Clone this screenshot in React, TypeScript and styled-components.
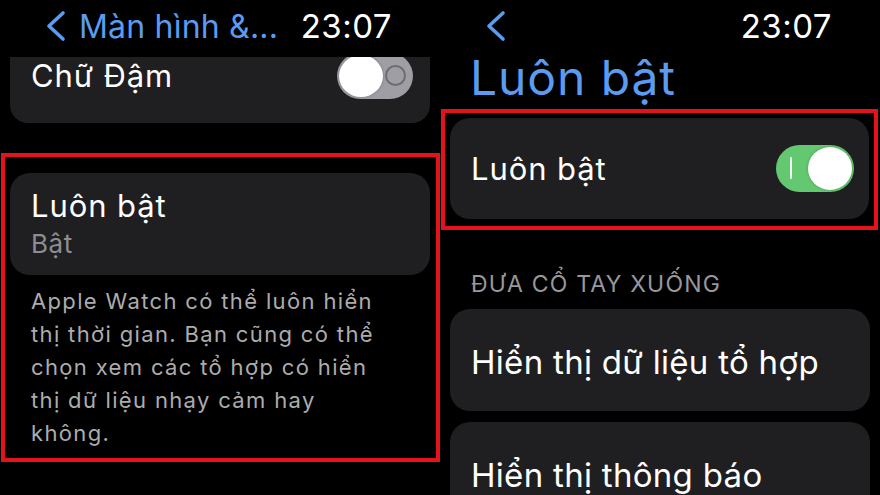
import styled, { createGlobalStyle } from "styled-components";

const GlobalStyle = createGlobalStyle`
  html, body {
    margin: 0;
    padding: 0;
    background: #000;
  }
  body {
    font-family: Inter, "Noto Sans", sans-serif;
    color: #fff;
    overflow: hidden;
  }
`;

const BLUE = "#5b9cf0";
const RED = "#e3121b";
const CARD = "#1f1f21";

function Chevron() {
  return (
    <svg width="22" height="32" viewBox="0 0 22 32" fill="none">
      <path
        d="M18 3 L4 16 L18 29"
        stroke={BLUE}
        strokeWidth="3.6"
        strokeLinecap="round"
        strokeLinejoin="round"
      />
    </svg>
  );
}

export default function App() {
  return (
    <>
      <GlobalStyle />
      <Screen>
        <Panel>
          <Header>
            <BackLink>
              <Chevron />
              <BackText>Màn hình &...</BackText>
            </BackLink>
            <Time>23:07</Time>
          </Header>

          <ClippedCard>
            <RowLabel>Chữ Đậm</RowLabel>
            <Toggle $on={false}>
              <Knob />
              <OffMark />
            </Toggle>
          </ClippedCard>

          <Highlight $top={30} $pad="16px 6px 8px 5px">
            <Card $height={102} $column $padTop={2}>
              <RowLabel>Luôn bật</RowLabel>
              <SubLabel>Bật</SubLabel>
            </Card>
            <Footnote>
              Apple Watch có thể luôn hiển thị thời gian. Bạn cũng có thể chọn
              xem các tổ hợp có hiển thị dữ liệu nhạy cảm hay không.
            </Footnote>
          </Highlight>
        </Panel>

        <Panel>
          <Header>
            <Chevron />
            <Time>23:07</Time>
          </Header>
          <LargeTitle>Luôn bật</LargeTitle>

          <Highlight $top={5} $pad="5px 5px 7px 5px" $right={2}>
            <Card $height={101} $padTop={0}>
              <RowLabel>Luôn bật</RowLabel>
              <Toggle $on>
                <OnMark />
                <Knob />
              </Toggle>
            </Card>
          </Highlight>

          <SectionTitle>ĐƯA CỔ TAY XUỐNG</SectionTitle>
          <List>
            <Card $height={102} $padTop={4}>
              <BigLabel>Hiển thị dữ liệu tổ hợp</BigLabel>
            </Card>
            <Card $height={102} $padTop={4}>
              <BigLabel>Hiển thị thông báo</BigLabel>
            </Card>
          </List>
        </Panel>
      </Screen>
    </>
  );
}

const Screen = styled.div`
  display: grid;
  grid-template-columns: 440px 440px;
  width: 880px;
  height: 495px;
  overflow: hidden;
  background: #000;
`;

const Panel = styled.div`
  display: flex;
  flex-direction: column;
  min-width: 0;
`;

const Header = styled.div`
  display: flex;
  align-items: center;
  justify-content: space-between;
  height: 52px;
  padding: 0 48px 0 45px;
`;

const BackLink = styled.div`
  display: flex;
  align-items: center;
  gap: 12px;
`;

const BackText = styled.span`
  color: ${BLUE};
  font-size: 32px;
  letter-spacing: 0.2px;
`;

const Time = styled.span`
  color: #fff;
  font-size: 33px;
  letter-spacing: 0.5px;
`;

const LargeTitle = styled.div`
  color: ${BLUE};
  font-size: 48px;
  line-height: 52px;
  letter-spacing: 0.9px;
  padding-left: 30px;
`;

const Card = styled.div<{ $height: number; $column?: boolean; $padTop: number }>`
  display: flex;
  flex-direction: ${(p) => (p.$column ? "column" : "row")};
  align-items: ${(p) => (p.$column ? "flex-start" : "center")};
  justify-content: ${(p) => (p.$column ? "center" : "space-between")};
  height: ${(p) => p.$height}px;
  box-sizing: border-box;
  padding: ${(p) => p.$padTop}px 15px 0 21px;
  background: ${CARD};
  border-radius: 20px;
`;

const ClippedCard = styled.div`
  display: flex;
  align-items: center;
  justify-content: space-between;
  height: 66px;
  box-sizing: border-box;
  margin: 5px 10px 0 10px;
  padding: 0 17px 28px 21px;
  background: ${CARD};
  border-radius: 0 0 18px 18px;
  overflow: hidden;
`;

const Highlight = styled.div<{ $top: number; $pad: string; $right?: number }>`
  margin: ${(p) => p.$top}px ${(p) => p.$right ?? 0}px 0 1px;
  padding: ${(p) => p.$pad};
  border: 4px solid ${RED};
`;

const RowLabel = styled.span`
  font-size: 31px;
  line-height: 38px;
  color: #fff;
  letter-spacing: 0.9px;
`;

const SubLabel = styled.span`
  font-size: 26px;
  line-height: 38px;
  color: #8d8d92;
  letter-spacing: 0.6px;
`;

const BigLabel = styled.span`
  font-size: 33px;
  color: #fff;
  letter-spacing: 0.3px;
`;

const Footnote = styled.p`
  width: 368px;
  margin: 10px 0 0 0;
  padding: 0 0 0 21px;
  font-size: 22px;
  line-height: 33px;
  letter-spacing: 1.35px;
  color: #acacae;
`;

const SectionTitle = styled.div`
  padding: 41px 0 0 31px;
  font-size: 23px;
  line-height: 26px;
  letter-spacing: 1.2px;
  color: #98989c;
`;

const List = styled.div`
  display: flex;
  flex-direction: column;
  gap: 11px;
  margin: 12px 10px 0 10px;
`;

const Toggle = styled.div<{ $on: boolean }>`
  position: relative;
  display: flex;
  align-items: center;
  justify-content: ${(p) => (p.$on ? "flex-end" : "flex-start")};
  flex-shrink: 0;
  width: ${(p) => (p.$on ? 78 : 76)}px;
  height: ${(p) => (p.$on ? 47 : 46)}px;
  box-sizing: border-box;
  padding: 2px;
  border-radius: 24px;
  background: ${(p) => (p.$on ? "#63c86f" : "#9e9ea4")};
`;

const Knob = styled.div`
  width: 44px;
  height: 100%;
  border-radius: 50%;
  background: #fff;
  box-shadow: 0 0 3px rgba(0, 0, 0, 0.25);
`;

const OnMark = styled.div`
  position: absolute;
  left: 14px;
  top: 12px;
  width: 2px;
  height: 22px;
  border-radius: 1px;
  background: #f2fff2;
`;

const OffMark = styled.div`
  position: absolute;
  right: 7px;
  top: 12px;
  width: 17px;
  height: 17px;
  border-radius: 50%;
  border: 2px solid #6c6c71;
`;
